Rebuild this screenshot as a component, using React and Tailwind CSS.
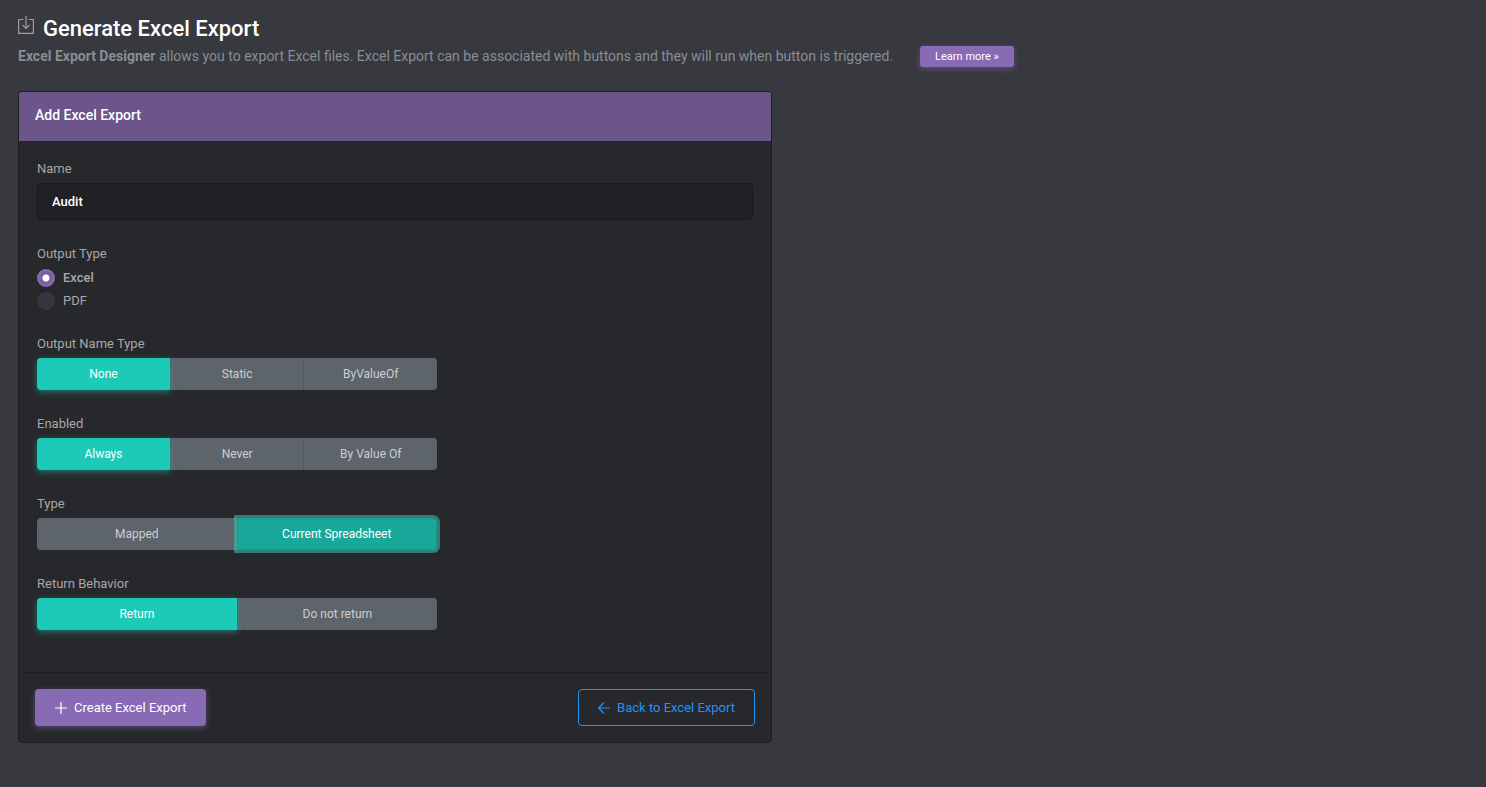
import React, { useState } from 'react';
import { clsx } from 'clsx';

function ExportIcon() {
  return (
    <svg className="w-4 h-5 shrink-0 text-[#9a9da3]" viewBox="0 0 16 20" fill="none" stroke="currentColor" strokeWidth="1.2" aria-hidden="true">
      <path d="M5.5 4.5H0.6V18.4H15.4V4.5H10.5" />
      <path d="M8 1V13.5" />
      <path d="M4.5 10L8 13.5L11.5 10" />
    </svg>
  );
}

function PlusIcon() {
  return (
    <svg className="w-3 h-3" viewBox="0 0 12 12" fill="none" stroke="currentColor" aria-hidden="true">
      <path d="M6 0V12M0 6H12" strokeWidth="1.2" />
    </svg>
  );
}

function BackIcon() {
  return (
    <svg className="w-3 h-3" viewBox="0 0 12 12" fill="none" stroke="currentColor" aria-hidden="true">
      <path d="M12 6H1M6 0.5L0.7 6L6 11.5" strokeWidth="1.2" />
    </svg>
  );
}

function ButtonGroup({ label, options, value, onChange, focused }) {
  const id = label.toLowerCase().replace(/ /g, '-');
  return (
    <div>
      <div id={id} className="mb-1 leading-5">{label}</div>
      <div role="group" aria-labelledby={id} className="flex w-full max-w-[400px] text-xs">
        {options.map((option, i) => {
          const active = option === value;
          return (
            <button
              key={option}
              type="button"
              aria-pressed={active}
              onClick={() => onChange(option)}
              className={clsx(
                'relative w-full h-8 first:rounded-l last:rounded-r',
                !active && 'bg-[#5d646b] text-[#cdced0]',
                !active && i > 0 && 'border-l border-[#51575e]',
                active && 'z-10 text-white',
                active && !focused && 'bg-[#1dc9b7] shadow-[0_2px_6px_0_rgba(29,201,183,0.5)]',
                active && focused && 'bg-[#18a899] border border-[#179c8e] shadow-[0_0_0_3px_rgba(63,209,194,0.5)]'
              )}
            >
              {option}
            </button>
          );
        })}
      </div>
    </div>
  );
}

function Radio({ label, checked, onChange }) {
  return (
    <label className={clsx('flex items-center gap-2 leading-[18px]', checked && 'font-medium')}>
      <input
        type="radio"
        name="outputType"
        checked={checked}
        onChange={onChange}
        className="appearance-none w-[18px] h-[18px] rounded-full border-2 border-[#37373f] bg-[#383444] checked:border-[#886ab5] checked:bg-[radial-gradient(circle,#fff_3px,#7a5fa2_4px)]"
      />
      {label}
    </label>
  );
}

export default function App() {
  const [name, setName] = useState('Audit');
  const [outputType, setOutputType] = useState('Excel');
  const [nameType, setNameType] = useState('None');
  const [enabled, setEnabled] = useState('Always');
  const [type, setType] = useState('Current Spreadsheet');
  const [returnBehavior, setReturnBehavior] = useState('Return');

  return (
    <main className="min-h-screen bg-[#37393e] px-[18px] pt-3 pb-11 font-[Roboto,sans-serif] text-[13px] text-[#a5a7aa]">
      <header className="mb-6">
        <div className="flex items-start gap-[9px]">
          <div className="pt-[3px]">
            <ExportIcon />
          </div>
          <h1 className="text-[22px] leading-[34px] font-medium text-white">Generate Excel Export</h1>
        </div>
        <div className="flex flex-wrap items-center gap-[27px] text-sm leading-[21px] text-[#868e96]">
          <p>
            <strong className="font-bold">Excel Export Designer</strong> allows you to export Excel files. Excel Export can be
            associated with buttons and they will run when button is triggered.
          </p>
          <a href="#learn-more" className="rounded-[3px] bg-[#886ab5] px-[15px] text-[11px] leading-[21px] text-white shadow-[0_2px_6px_0_rgba(136,106,181,0.5)]">
            Learn more »
          </a>
        </div>
      </header>

      <form className="w-[52%] min-w-[440px] rounded border border-[#1d1e21] bg-[#27282c]" onSubmit={(e) => e.preventDefault()}>
        <h2 className="rounded-t-[3px] bg-[#6b558b] px-4 pt-[13px] pb-[15px] text-sm leading-[21px] font-medium text-white">
          Add Excel Export
        </h2>

        <div className="flex flex-col gap-6 px-[18px] pt-[18px] pb-[42px]">
          <div>
            <label htmlFor="name" className="block mb-1 leading-5">Name</label>
            <input
              id="name"
              type="text"
              value={name}
              onChange={(e) => setName(e.target.value)}
              className="block w-full h-[37px] rounded border border-[#191a1d] bg-[#202125] px-3.5 font-medium text-white outline-none"
            />
          </div>

          <fieldset>
            <legend className="mb-[5px] leading-5">Output Type</legend>
            <div className="flex flex-col gap-[5px]">
              {['Excel', 'PDF'].map((option) => (
                <Radio key={option} label={option} checked={outputType === option} onChange={() => setOutputType(option)} />
              ))}
            </div>
          </fieldset>

          <ButtonGroup label="Output Name Type" options={['None', 'Static', 'ByValueOf']} value={nameType} onChange={setNameType} />
          <ButtonGroup label="Enabled" options={['Always', 'Never', 'By Value Of']} value={enabled} onChange={setEnabled} />
          <ButtonGroup label="Type" options={['Mapped', 'Current Spreadsheet']} value={type} onChange={setType} focused />
          <ButtonGroup label="Return Behavior" options={['Return', 'Do not return']} value={returnBehavior} onChange={setReturnBehavior} />
        </div>

        <div className="flex justify-between border-t border-[#1f2023] p-4">
          <button type="submit" className="flex h-[37px] items-center gap-[7px] rounded bg-[#886ab5] px-5 text-white shadow-[0_2px_6px_0_rgba(136,106,181,0.5)]">
            <PlusIcon />
            Create Excel Export
          </button>
          <a href="#back" className="flex h-[37px] items-center gap-[7px] rounded border border-[#2196f3] px-[19px] text-[#2490f5]">
            <BackIcon />
            Back to Excel Export
          </a>
        </div>
      </form>
    </main>
  );
}
